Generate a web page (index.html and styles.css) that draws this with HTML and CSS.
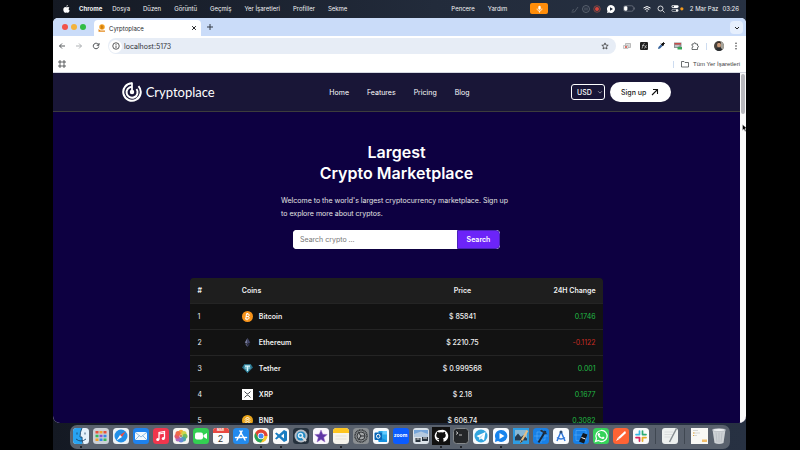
FILE: index.html
```html
<!DOCTYPE html>
<html lang="en">
<head>
<meta charset="utf-8">
<title>Cyrptoplace</title>
<link rel="stylesheet" href="styles.css">
</head>
<body>
<div class="desktop">
  <header class="menubar" lang="tr">
    <svg class="apple" viewBox="0 0 16 18"><path fill="#fff" d="M11 0c.2 2-1.500 4-3.300 4C7.500 2 9.200.3 11 0zM8 5c1 0 2-.8 3.500-.8 1.300 0 2.500.7 3.200 1.700-2.800 1.700-2.300 5.500.6 6.700C14.500 15 13 17.600 11.300 17.600c-1.200 0-1.600-.7-3.100-.7s-2 .7-3.100.7C3 17.600.7 13.600.7 10 .7 6.300 3 4.300 5.200 4.300 6.400 4.300 7.300 5 8 5z"/></svg>
    <strong>Chrome</strong>
    <nav class="menus"><span>Dosya</span><span>Düzen</span><span>Görüntü</span><span>Geçmiş</span><span>Yer İşaretleri</span><span>Profiller</span><span>Sekme</span></nav>
    <nav class="menus after-notch"><span>Pencere</span><span>Yardım</span></nav>
    <span class="mic"><svg viewBox="0 0 8 10"><rect x="2.500" y="1" width="3" height="5" rx="1.500" fill="#fff"/><path d="M1 4.500c0 4 6 4 6 0M4 7.500V9.500" stroke="#fff" fill="none"/></svg></span>
    <div class="status">
      <div class="recording">
        <svg class="s8" viewBox="0 0 16 16" fill="none" stroke="#5e6673" stroke-width="1.500"><path d="M1 14h6l7-10M2 11l4-2"/></svg>
        <svg class="s8" viewBox="0 0 16 16" fill="none" stroke="#69717e" stroke-width="1.500"><circle cx="8" cy="8" r="7"/><path d="M6 5v6M10 5v6"/></svg>
        <svg class="s8" viewBox="0 0 16 16"><circle cx="8" cy="8" r="6.500" fill="none" stroke="#a35148" stroke-width="1.500"/><circle cx="8" cy="8" r="4" fill="#d8453c"/></svg>
      </div>
      <svg class="s8 play" viewBox="0 0 16 16"><path fill="#fff" d="M8 0a8 8 0 1 1-4 15L0 16l1-4A8 8 0 0 1 8 0z"/><path fill="#222b3a" d="M6 4.500v7L12 8z"/></svg>
      <svg class="battery" viewBox="0 0 22 12"><rect x="1" y="1" width="18" height="10" rx="3" fill="none" stroke="#8a919c"/><rect x="2" y="2" width="6" height="8" rx="2" fill="#fff"/><path d="M21 4v4" stroke="#8a919c"/></svg>
      <svg class="s8" viewBox="0 0 16 16" fill="none" stroke="#fff" stroke-width="2"><path d="M1 6q7-6 14 0M3.500 9q4.500-4 9 0"/><path d="M6 11.500q2-1.500 4 0L8 14z" fill="#fff" stroke="none"/></svg>
      <svg class="s8" viewBox="0 0 16 16" fill="none" stroke="#fff" stroke-width="1.600"><circle cx="7" cy="7" r="5"/><path d="M11 11l4 4"/></svg>
      <svg class="control" viewBox="0 0 24 16"><rect x="1" y="2" width="13" height="5" rx="2.500" fill="#fff"/><circle cx="4" cy="4.500" r="1.500" fill="#222b3a"/><rect x="1.500" y="9.500" width="12" height="4" rx="2" fill="none" stroke="#fff"/><circle cx="11" cy="11.500" r="2" fill="#fff"/><circle cx="20" cy="8.500" r="3" fill="#f59a1c"/></svg>
      <span class="date">2 Mar Paz</span><span>03:26</span>
    </div>
  </header>

  <div class="window">
    <div class="tabs">
      <div class="lights"><i class="red"></i><i class="amber"></i><i class="green"></i></div>
      <div class="tab">
        <svg class="s8" viewBox="0 0 16 16"><circle cx="8" cy="6" r="5.500" fill="#f5a11f"/><path d="M6.500 3v6M6.500 3.500h2.500q1 1.200 0 2.500H6.500h3q1 1.500-.5 3H6.500" fill="none" stroke="#b86a09"/><path d="M1 10l4 3h9v2.500H1z" fill="#e58a1d"/></svg>
        <span>Cyrptoplace</span>
        <button class="plain close" aria-label="Close tab"><svg viewBox="0 0 8 8"><path d="M1.500 1.500l5 5M6.500 1.500l-5 5" stroke="#202124" stroke-width="1.300"/></svg></button>
      </div>
      <button class="plain new-tab" aria-label="New tab"><svg viewBox="0 0 8 8"><path d="M4 1v6M1 4h6" stroke="#333a46"/></svg></button>
      <button class="plain tab-search" aria-label="Search tabs"><svg viewBox="0 0 8 8"><path d="M2 3l2 2 2-2" fill="none" stroke="#222"/></svg></button>
    </div>
    <div class="toolbar">
      <button class="plain" aria-label="Back"><svg viewBox="0 0 16 16" fill="none" stroke="#3c4043" stroke-width="1.700"><path d="M14 8H3M8 3L3 8l5 5"/></svg></button>
      <button class="plain" aria-label="Forward"><svg viewBox="0 0 16 16" fill="none" stroke="#a2a5a9" stroke-width="1.700"><path d="M2 8h11M8 3l5 5-5 5"/></svg></button>
      <button class="plain" aria-label="Reload"><svg viewBox="0 0 16 16" fill="none" stroke="#3c4043" stroke-width="1.800"><path d="M13 5.500A5.500 5.500 0 1 0 13.500 9M14 2v4.500H9.500"/></svg></button>
      <div class="address">
        <span class="info"><svg viewBox="0 0 16 16"><circle cx="8" cy="8" r="6.500" fill="none" stroke="#333" stroke-width="1.600"/><path d="M8 7v5M8 4v1.700" stroke="#333" stroke-width="1.600"/></svg></span>
        <input type="text" aria-label="Address" value="localhost:5173">
        <button class="plain" aria-label="Bookmark"><svg viewBox="0 0 16 16"><path d="M8 1.800l1.800 4.300 4.600.4-3.500 3 1.100 4.500L8 11.600 4 14l1.100-4.500-3.500-3 4.600-.4z" fill="none" stroke="#333" stroke-width="1.500"/></svg></button>
      </div>
      <div class="extensions">
        <svg viewBox="0 0 16 16"><path d="M5 3h10v8H5z" fill="#ddd" stroke="#888"/><path d="M1 7h9v6H1z" fill="#eee" stroke="#999"/><circle cx="6" cy="10" r="2" fill="#d54b3f"/></svg>
        <svg viewBox="0 0 16 16"><rect width="16" height="16" rx="2" fill="#202020"/><path d="M4 13L7 4q.5-1 2-1M4 7h4M9 7l4 5M13 6l-4 7" stroke="#ddd" stroke-width="1.300" fill="none"/></svg>
        <svg viewBox="0 0 16 16"><path d="M2 14l1-4 5-5 3 3-5 5z" fill="#35619b"/><path d="M8 3l5 5M9 5l4-4 2 2-4 4z" fill="#111" stroke="#111" stroke-width="2"/></svg>
        <svg viewBox="0 0 16 16"><path d="M0 1h15v11H0z" fill="#8d9598"/><path d="M1 2h13v3H1z" fill="#c94b48"/><path d="M2 7h9M2 9h7" stroke="#eee"/><path d="M7 10h9v5H7z" fill="#38a556"/></svg>
        <svg viewBox="0 0 16 16"><path d="M2 4h3.500q0-2.500 2-2.500t2 2.500H13v3.500q2 0 2 1.700T13 11v4H2v-4q2 0 2-1.800T2 7.500z" fill="none" stroke="#3c4043" stroke-width="1.500"/></svg>
      </div>
      <i class="divider"></i>
      <svg class="avatar" viewBox="0 0 20 20"><circle cx="10" cy="10" r="10" fill="#47423c"/><path d="M12 0q8 3 8 10t-5 9z" fill="#a6a49b"/><ellipse cx="10" cy="8" rx="4" ry="5" fill="#c99978"/><path d="M3 17q7-8 14 0-7 6-14 0z" fill="#292d31"/><path d="M6 6q3-5 8 0l-1-4H8z" fill="#33251d"/></svg>
      <button class="plain" aria-label="Menu"><svg viewBox="0 0 16 16" fill="#333"><circle cx="8" cy="2.500" r="1.500"/><circle cx="8" cy="8" r="1.500"/><circle cx="8" cy="13.500" r="1.500"/></svg></button>
    </div>
    <div class="bookmarks" lang="tr">
      <svg class="s8" viewBox="0 0 16 16" fill="none" stroke="#3c4043" stroke-width="1.600"><path d="M2 2h4v4H2zM10 2h4v4h-4zM2 10h4v4H2zM10 10h4v4h-4z"/></svg>
      <i class="divider"></i>
      <svg class="s8" viewBox="0 0 16 16"><path d="M1 3h5l2 2h7v9H1z" fill="none" stroke="#3c4043" stroke-width="1.500"/></svg>
      <span>Tüm Yer İşaretleri</span>
    </div>

    <div class="viewport">
      <div class="site">
        <header class="navbar">
          <a class="logo" href="#">
            <svg viewBox="0 0 40 40" fill="none" stroke="#fff" stroke-width="4"><path d="M20 2.500A17.500 17.500 0 1 0 33 8.300"/><path d="M20 9.500A11 11 0 1 0 29 14"/><path d="M20 1v19" stroke-width="3.500"/><circle cx="20" cy="20" r="4.500" fill="#fff" stroke="none"/></svg>
            <span>Cryptoplace</span>
          </a>
          <nav class="links"><a href="#">Home</a><a href="#">Features</a><a href="#">Pricing</a><a href="#">Blog</a></nav>
          <div class="actions">
            <span class="currency"><select aria-label="Currency"><option>USD</option></select><svg viewBox="0 0 8 8"><path d="M1.500 3L4 5.500 6.500 3" fill="none" stroke="#bbb"/></svg></span>
            <button class="signup">Sign up <svg viewBox="0 0 16 16"><path d="M2 14L13 3M4 3h9v9" fill="none" stroke="#111" stroke-width="2.200"/></svg></button>
          </div>
        </header>
        <main>
          <section class="hero">
            <h1>Largest<br>Crypto Marketplace</h1>
            <p>Welcome to the world's largest cryptocurrency marketplace. Sign up to explore more about cryptos.</p>
            <form class="search"><input type="text" aria-label="Search crypto" placeholder="Search crypto ..."><button type="button">Search</button></form>
          </section>
          <table class="coins">
            <thead><tr><th class="rank">#</th><th class="name">Coins</th><th class="price">Price</th><th class="change">24H Change</th></tr></thead>
            <tbody>
              <tr><td>1</td><td class="name"><svg viewBox="0 0 22 22"><circle cx="11" cy="11" r="11" fill="#f7931a"/><path d="M9 5.500L7.500 16M8 6h4q3 0 2.500 2.500T11 11H8h4q3 .5 2.300 3T11 16H6.500M11 4v2M10 16v2.500" fill="none" stroke="#fff" stroke-width="2"/></svg>Bitcoin</td><td class="price">$ 85841</td><td class="change up">0.1746</td></tr>
              <tr><td>2</td><td class="name"><svg viewBox="0 0 22 22"><path d="M11 2L5.500 11l5.500 3z" fill="#777c9c"/><path d="M11 2l5.500 9-5.500 3z" fill="#42466b"/><path d="M5.500 12.500l5.500 3V20z" fill="#686d90"/><path d="M16.500 12.500l-5.500 3V20z" fill="#343859"/></svg>Ethereum</td><td class="price">$ 2210.75</td><td class="change down">-0.1122</td></tr>
              <tr><td>3</td><td class="name"><svg viewBox="0 0 22 22"><path d="M4 3h14l4 6-11 11L0 9z" fill="#286f87"/><path d="M4 3h14l-2 6-5 11L5 9z" fill="#429bb5"/><path d="M6 6h10M11 6v10" stroke="#e2fbff" stroke-width="2.500"/><ellipse cx="11" cy="10" rx="6" ry="1.500" fill="none" stroke="#c0e8ee"/></svg>Tether</td><td class="price">$ 0.999568</td><td class="change up">0.001</td></tr>
              <tr><td>4</td><td class="name"><svg viewBox="0 0 22 22"><path fill="#fff" d="M0 0h22v22H0z"/><path d="M5 5l3.500 3.500q2.500 2.500 5 0L17 5M5 17l3.500-3.500q2.500-2.500 5 0L17 17" fill="none" stroke="#23292f" stroke-width="1.800"/></svg>XRP</td><td class="price">$ 2.18</td><td class="change up">0.1677</td></tr>
              <tr><td>5</td><td class="name"><svg viewBox="0 0 22 22"><circle cx="11" cy="11" r="11" fill="#e9a51c"/><path d="M6 9l5-5 5 5M8 11l3-3 3 3-3 3zM6 13l5 5 5-5" fill="none" stroke="#fff" stroke-width="2"/></svg>BNB</td><td class="price">$ 606.74</td><td class="change up">0.3082</td></tr>
            </tbody>
          </table>
        </main>
      </div>
      <div class="scrollbar"><i></i><svg class="cursor" viewBox="0 0 10 16"><path d="M1 1v12l3-3 2 5 2-1-2-5h4z" fill="#000" stroke="#fff" stroke-width=".7"/></svg></div>
    </div>
  </div>

  <footer class="dock">
    <span class="app open"><svg viewBox="0 0 32 32"><rect width="32" height="32" rx="7" fill="#e6f1fa"/><path d="M7 0h11q-4 8-4 18h4v14H7q-7 0-7-7V7q0-7 7-7z" fill="#28a3f2"/><path d="M18 0q-4 8-4 18h4q0 8 2 14M8 9v4M24 9v4M6 22q10 8 20 0" fill="none" stroke="#174066" stroke-width="1.700"/></svg></span>
    <span class="app"><svg viewBox="0 0 32 32"><rect width="32" height="32" rx="7" fill="#cbd0d6"/><path fill="#e7503d" d="M5 6h6v5H5zM21 6h6v5h-6z"/><path fill="#f4a12a" d="M13 6h6v5h-6zM5 21h6v5H5z"/><path fill="#38b956" d="M5 13.500h6v5H5zM21 21h6v5h-6z"/><path fill="#8a54d0" d="M13 13.500h6v5h-6z"/><path fill="#3389e8" d="M21 13.500h6v5h-6zM13 21h6v5h-6z"/></svg></span>
    <span class="app"><svg viewBox="0 0 32 32"><rect width="32" height="32" rx="7" fill="#edf2f5"/><circle cx="16" cy="16" r="13" fill="#218fe8"/><path d="M25 7L14 14l4 4z" fill="#f04c3e"/><path d="M7 25l7-11 4 4z" fill="#fff"/></svg></span>
    <span class="app"><svg viewBox="0 0 32 32"><rect width="32" height="32" rx="7" fill="#1e82ee"/><rect x="4" y="8" width="24" height="16" rx="3" fill="#f3f8fe"/><path d="M5 9l11 9L27 9M5 23l8-8M27 23l-8-8" fill="none" stroke="#6da6d7" stroke-width="1.500"/></svg></span>
    <span class="app"><svg viewBox="0 0 32 32"><rect width="32" height="32" rx="7" fill="#f0364d"/><path d="M12 23V9l11-2v14M12 12l11-2" fill="none" stroke="#fff" stroke-width="2.500"/><circle cx="9.500" cy="23" r="3" fill="#fff"/><circle cx="20.500" cy="21" r="3" fill="#fff"/></svg></span>
    <span class="app"><svg viewBox="0 0 32 32"><rect width="32" height="32" rx="7" fill="#f6f5f1"/><g opacity=".9"><circle cx="16" cy="8.500" r="5" fill="#f6a823"/><circle cx="22" cy="11" r="5" fill="#ccd33a"/><circle cx="24" cy="16.500" r="5" fill="#64b94b"/><circle cx="21" cy="22" r="5" fill="#3b9f9a"/><circle cx="16" cy="24" r="5" fill="#557fd4"/><circle cx="10" cy="22" r="5" fill="#a25bb7"/><circle cx="8" cy="16.500" r="5" fill="#df4a60"/><circle cx="10" cy="11" r="5" fill="#ee5b37"/></g><circle cx="16" cy="16" r="2" fill="#b06b2f"/></svg></span>
    <span class="app"><svg viewBox="0 0 32 32"><rect width="32" height="32" rx="7" fill="#33d052"/><rect x="4" y="9" width="16" height="14" rx="4" fill="#fff"/><path d="M21 14l7-4v12l-7-4z" fill="#fff"/></svg></span>
    <span class="app calendar"><b>MAR</b><span>2</span></span>
    <span class="app"><svg viewBox="0 0 32 32"><rect width="32" height="32" rx="7" fill="#238bee"/><path d="M18 6L8 24M14 6l10 18M5 19h13M22 19h5" stroke="#fff" stroke-width="3" stroke-linecap="round"/></svg></span>
    <span class="app open"><svg viewBox="0 0 32 32"><rect width="32" height="32" rx="7" fill="#fafafa"/><circle cx="16" cy="16" r="13" fill="#f8c72d"/><path d="M16 16H29A13 13 0 0 0 4.700 9.500L10 19z" fill="#df4437"/><path d="M4.700 9.500A13 13 0 0 0 16 29l6-10H10z" fill="#24a259"/><circle cx="16" cy="16" r="6.500" fill="#fff"/><circle cx="16" cy="16" r="5" fill="#4285f4"/></svg></span>
    <span class="app open"><svg viewBox="0 0 32 32"><rect width="32" height="32" rx="7" fill="#fafafa"/><path d="M22 4l6 3v18l-6 3L12 19l-5 4-3-2 5-5-5-5 3-2 5 4zM22 11l-6 5 6 5z" fill="#187cc1" fill-rule="evenodd"/></svg></span>
    <span class="app"><svg viewBox="0 0 32 32"><rect width="32" height="32" rx="7" fill="#25313d"/><circle cx="16" cy="16" r="13" fill="#b6bdc6"/><circle cx="16" cy="16" r="9" fill="#1e87c2"/><circle cx="15" cy="15" r="4" fill="none" stroke="#d9f1ff" stroke-width="3"/><path d="M18 18l8 8" stroke="#ddd" stroke-width="4"/></svg></span>
    <span class="app"><svg viewBox="0 0 32 32"><rect width="32" height="32" rx="7" fill="#faf7fc"/><path d="M16 4l3.500 8.500 9 .5-7 6 2.500 9-8-5-8 5 2.500-9-7-6 9-.5z" fill="#5d35a5" stroke="#9c70c5"/></svg></span>
    <span class="app open"><svg viewBox="0 0 32 32"><rect width="32" height="32" rx="7" fill="#f6f4ec"/><path d="M0 10V7q0-7 7-7h18q7 0 7 7v3z" fill="#fdc51f"/><path d="M5 16h22M5 22h22" stroke="#d3d1ca"/></svg></span>
    <span class="app"><svg viewBox="0 0 32 32"><rect width="32" height="32" rx="7" fill="#8b8f92"/><circle cx="16" cy="16" r="12" fill="none" stroke="#303336" stroke-width="3" stroke-dasharray="2 1"/><circle cx="16" cy="16" r="8" fill="#a3a6a8" stroke="#34373a" stroke-width="2"/><path d="M16 16h8M16 16l-5-7M16 16l-5 7" stroke="#26292c" stroke-width="2"/></svg></span>
    <span class="app"><svg viewBox="0 0 32 32"><rect width="32" height="32" rx="7" fill="#f7fafc"/><path d="M11 6h17v20H11z" fill="#28a8ea"/><path d="M19 6h9v7h-9z" fill="#62caff"/><path d="M11 17l17 8v3H11z" fill="#1490df"/><rect x="3" y="9" width="15" height="15" rx="2" fill="#0867b9"/><ellipse cx="10.500" cy="16.500" rx="3.500" ry="4" fill="none" stroke="#fff" stroke-width="2"/></svg></span>
    <span class="app zoom">zoom</span>
    <span class="app"><svg viewBox="0 0 32 32"><rect width="32" height="32" rx="6" fill="#dbe2e9"/><path d="M2 4h28v14H2z" fill="#75a5da"/><path d="M2 12l14-5 14 5v6H2z" fill="#b4c9df"/><path d="M5 20h10v8H5zM18 18h12v8H18z" fill="#28323d"/><path d="M7 22h6M20 20h8" stroke="#eee" stroke-width="2"/></svg></span>
    <span class="app github open"><svg viewBox="0 0 32 32"><path d="M16 4a12 12 0 0 0-4 23.500V24q-3 .5-4-2.500 2 1 3.500 1 0-1.500 1-2-6-1-6-6 0-2 1.500-3.500-.5-2 .2-3.500 1.800 0 3.800 1.400 4-1 8 0Q22 7.500 24 7.500q.7 1.500 0 3.500 1.500 1.500 1.500 3.500 0 5-5.500 6 1 1 1 3v4A12 12 0 0 0 16 4z" fill="#fff"/></svg></span>
    <span class="app open"><svg viewBox="0 0 32 32"><rect x="1" y="1" width="30" height="30" rx="6" fill="#242629" stroke="#85898c" stroke-width="2"/><path d="M6 7l4 3-4 3M12 14h6" fill="none" stroke="#eee" stroke-width="1.500"/></svg></span>
    <span class="app"><svg viewBox="0 0 32 32"><rect width="32" height="32" rx="7" fill="#f7fafc"/><circle cx="16" cy="16" r="13" fill="#32a5df"/><path d="M7 16l18-8-3 17-6-4-3 3-1-5z" fill="#fff"/><path d="M12 19l10-8-7 10" fill="#b8dff2"/></svg></span>
    <span class="app open"><svg viewBox="0 0 32 32"><rect width="32" height="32" rx="7" fill="#f9fbff"/><path d="M16 4a12 12 0 1 1-6 22l-6 2 1-7A12 12 0 0 1 16 4z" fill="#1683ed"/><path d="M13 10v12l10-6z" fill="#fff"/></svg></span>
    <span class="app"><svg viewBox="0 0 32 32"><path d="M0 0h32v32H0z" fill="#2d9ce3"/><path d="M4 4h24v21H4z" fill="#89b8d4"/><path d="M4 18l6-7 6 7 5-4 7 7v4H4z" fill="#273c50"/><path d="M29 5L15 29" stroke="#e6bf83" stroke-width="4"/><path d="M17 24l-3 7 6-5" fill="#333"/></svg></span>
    <span class="app"><svg viewBox="0 0 32 32"><rect width="32" height="32" rx="7" fill="#1880e6"/><path d="M8 8h16v16H8zM2 16h28M16 2v28" fill="none" stroke="#62b7ff"/><path d="M25 6L11 29" stroke="#17283a" stroke-width="4"/><path d="M16 3l12 7-2 3-12-7z" fill="#263240"/></svg></span>
    <span class="app"><svg viewBox="0 0 32 32"><rect width="32" height="32" rx="7" fill="#fafcfe"/><path d="M16 7L8 26M16 7l8 19M8 19q8 6 16 0" fill="none" stroke="#3279dc" stroke-width="3"/><circle cx="16" cy="8" r="3" fill="#2c4d78"/></svg></span>
    <span class="app"><svg viewBox="0 0 32 32"><rect width="32" height="32" rx="7" fill="#1880e6"/><path d="M6 5h20v20H6zM2 14h28" fill="none" stroke="#62b7ff"/><path d="M20 10l9 3-7 18-10-4z" fill="#12181f"/><path d="M17 19l8 3" stroke="#fff" stroke-width="2"/></svg></span>
    <span class="app"><svg viewBox="0 0 32 32"><rect width="32" height="32" rx="7" fill="#35d35a"/><path d="M16 5a11 11 0 1 1-5 20l-6 2 2-6A11 11 0 0 1 16 5z" fill="none" stroke="#fff" stroke-width="2.500"/><path d="M11 10l2 0 1.500 3-1.500 2q2 3 5 4l2-2 3 2q0 3-4 3-8-2-10-9 0-2 2-3z" fill="#fff"/></svg></span>
    <span class="app"><svg viewBox="0 0 32 32"><rect width="32" height="32" rx="7" fill="#ff6334"/><path d="M24 6q3 2 1 5L13 22l-7 4 4-7z" fill="#fff"/><path d="M10 19l3 3" stroke="#ff6334"/></svg></span>
    <span class="app"><svg viewBox="0 0 32 32"><rect width="32" height="32" rx="7" fill="#fafafa"/><g fill="none" stroke-width="3.500" stroke-linecap="round"><path d="M13 6v7M6 13h7" stroke="#36b9e6"/><path d="M19 13V6M19 13h7" stroke="#2eac75"/><path d="M19 19h7M19 19v7" stroke="#e5ad29"/><path d="M6 19h7M13 19v7" stroke="#d8255d"/></g></svg></span>
    <i class="dock-divider"></i>
    <span class="app"><svg viewBox="0 0 32 32"><rect width="32" height="32" rx="6" fill="#edf0ef"/><path d="M5 8h18M5 13h16M5 18h12" stroke="#c4c8c8"/><path d="M29 1L15 28" stroke="#858c90" stroke-width="3"/></svg></span>
    <i class="dock-divider"></i>
    <span class="app file"><svg viewBox="0 0 34 32"><path d="M0 0h34v32H0z" fill="#f8f8f5"/><path d="M4 5h10M4 10h14M4 15h8" stroke="#b1b4b3"/><path d="M4 10h3M4 15h2" stroke="#e9a93c" stroke-width="2"/><path d="M22 23h10v5H22z" fill="#f3bd68"/></svg></span>
    <span class="app trash"><svg viewBox="0 0 28 32"><path d="M1 3h26l-4 27q-9 4-18 0z" fill="#cdd1d4"/><ellipse cx="14" cy="4" rx="13" ry="3" fill="#eef0f2" stroke="#a5abb1"/><path d="M8 9l2 19M14 9v20M20 9l-2 19" stroke="#a8aeb4"/></svg></span>
  </footer>
</div>
</body>
</html>
```
FILE: styles.css
```css
* { box-sizing: border-box; }
body {
  margin: 0;
  padding: 0 54px 0 53px;
  background: #000;
  font-family: Inter, "Liberation Sans", sans-serif;
  font-size: 7px;
}
svg { display: block; flex: none; }
a { color: inherit; text-decoration: none; }
button, input, select { font: inherit; }
.desktop {
  height: 100vh;
  display: flex;
  flex-direction: column;
  overflow: hidden;
  background: linear-gradient(90deg, #141923, #222b3b 55%, #273142);
}
.s8 { width: 8px; height: 8px; }
.plain {
  border: 0;
  padding: 0;
  background: none;
  display: grid;
  place-items: center;
  flex: none;
}
.plain svg { width: 8px; height: 8px; }
.divider { width: 1px; height: 7px; background: #cddcf0; flex: none; }

/* System menu bar */
.menubar {
  height: 17px;
  flex: none;
  display: flex;
  align-items: center;
  padding: 0 7px 0 10px;
  color: #f2f3f5;
  font-size: 6px;
  white-space: nowrap;
}
.apple { width: 7px; height: 8px; margin-right: 9px; }
.menubar strong { margin-right: 10px; }
.menus { display: flex; gap: 13px; }
.after-notch { margin-left: 104px; }
.mic {
  width: 18px;
  height: 11px;
  margin-left: 23px;
  border-radius: 2px;
  background: #ff8d0a;
  display: grid;
  place-items: center;
}
.mic svg { width: 7px; height: 8px; }
.status { display: flex; align-items: center; gap: 6px; margin-left: auto; }
.recording { display: flex; gap: 3px; }
.play, .battery { margin-right: 2px; }
.battery { width: 12px; height: 7px; }
.control { width: 13px; height: 9px; }
.date { margin-right: -2px; }

/* Browser chrome */
.window {
  flex: 1;
  min-height: 0;
  display: flex;
  flex-direction: column;
  overflow: hidden;
  border-radius: 5px 5px 7px 7px;
  margin-top: 1px;
  background: #fff;
}
.tabs {
  height: 18px;
  flex: none;
  display: flex;
  align-items: flex-end;
  padding: 0 3px 0 9px;
  background: #cadcf9;
}
.lights { display: flex; gap: 3px; align-self: center; margin-right: 8px; }
.lights i { width: 6px; height: 6px; border-radius: 50%; }
.red { background: #f25348; }
.amber { background: #f3b33c; }
.green { background: #30bd45; }
.tab {
  width: 107px;
  height: 16px;
  display: flex;
  align-items: center;
  gap: 3px;
  padding: 0 4px;
  border-radius: 4px 4px 0 0;
  background: #fff;
  color: #25282c;
  font-size: 6px;
}
.close { margin-left: auto; }
.plain.close svg { width: 6px; height: 6px; }
.new-tab { width: 18px; height: 18px; }
.tab-search {
  width: 13px;
  height: 13px;
  margin: 0 0 2px auto;
  border-radius: 4px;
  background: #e6effd;
}
.toolbar {
  height: 20px;
  flex: none;
  display: flex;
  align-items: center;
  gap: 7px;
  padding: 0 5px 0 4px;
}
.toolbar > .plain { width: 10px; height: 10px; }
.address {
  flex: 1;
  height: 16px;
  display: flex;
  align-items: center;
  padding: 0 7px 0 1px;
  border-radius: 8px;
  background: #e7edf6;
}
.info {
  width: 13px;
  height: 13px;
  border-radius: 50%;
  background: #fff;
  display: grid;
  place-items: center;
}
.info svg { width: 8px; height: 8px; }
.address input {
  flex: 1;
  min-width: 0;
  border: 0;
  padding: 0 2px;
  background: none;
  color: #303338;
  outline: 0;
}
.extensions { display: flex; gap: 9px; }
.extensions svg { width: 8px; height: 8px; }
.avatar { width: 10px; height: 10px; }
.bookmarks {
  height: 17px;
  flex: none;
  display: flex;
  align-items: center;
  gap: 4px;
  padding: 0 6px 0 5px;
  border-bottom: 1px solid #d5d9e1;
  color: #3c4043;
  font-family: "Liberation Sans", sans-serif;
  font-size: 6px;
}
.bookmarks .divider { margin: 0 3px 0 auto; }

/* Page */
.viewport { flex: 1; min-height: 0; display: flex; background: #0d0041; }
.site { flex: 1; min-width: 0; overflow: hidden; color: #fff; }
.scrollbar { width: 6px; position: relative; background: #fafafa; padding: 1px 1px 0; }
.scrollbar i { display: block; height: 40px; border-radius: 2px; background: #b8b8bd; }
.cursor { position: absolute; left: 2px; top: 51px; width: 5px; height: 8px; }
.navbar {
  height: 39px;
  display: flex;
  align-items: center;
  justify-content: space-between;
  padding: 0 10%;
  border-bottom: 1px solid #3c3c3c;
  background: #191637;
}
.logo { display: flex; align-items: center; gap: 4px; font: 13px Lato, sans-serif; }
.logo svg { width: 20px; height: 20px; }
.links { display: flex; gap: 18px; margin-left: 13px; }
.actions { display: flex; align-items: center; gap: 5px; }
.currency {
  display: flex;
  align-items: center;
  width: 34px;
  height: 16px;
  padding: 0 1px 0 5px;
  border: 1px solid #fff;
  border-radius: 3px;
  font-weight: 500;
}
.currency select {
  appearance: none;
  flex: 1;
  min-width: 0;
  border: 0;
  padding: 0;
  background: none;
  color: #fff;
}
.currency svg { width: 6px; height: 6px; }
.signup {
  display: flex;
  align-items: center;
  gap: 5px;
  height: 20px;
  padding: 0 12px 0 11px;
  border: 0;
  border-radius: 10px;
  background: #fff;
  color: #191919;
  font-weight: 500;
}
.signup svg { width: 8px; height: 8px; }
.hero { display: flex; flex-direction: column; align-items: center; padding: 30px 0 29px; }
h1 { margin: 0; text-align: center; font-size: 16px; line-height: 21px; font-weight: 600; }
.hero p { width: 231px; margin: 10px 0; color: #e3e3e3; line-height: 13px; }
.search { display: flex; width: 207px; height: 19px; border-radius: 4px; background: #fff; overflow: hidden; }
.search input {
  flex: 1;
  min-width: 0;
  border: 0;
  padding: 0 7px;
  background: #fff;
  color: #222;
}
.search input::placeholder { color: #757575; }
.search button {
  width: 43px;
  border: 1px solid #4a22b8;
  border-radius: 0 4px 4px 0;
  background: #6c24f8;
  color: #fff;
  font-weight: 600;
  padding: 0;
}
.coins {
  width: 60%;
  margin: 0 auto;
  table-layout: fixed;
  border-spacing: 0;
  border-radius: 4px;
  overflow: hidden;
  background: #121212;
  color: #f0f0f0;
}
.coins th, .coins td { height: 26px; padding: 0 7px; text-align: left; border-bottom: 1px solid #242424; }
.coins .rank { width: 12%; }
.coins .name { width: 42%; padding-left: 2px; font-weight: 600; }
.coins .price { width: 24%; text-align: center; font-weight: 500; }
.coins .change { text-align: right; }
.coins th, .coins th.price { background: #1e1e1e; font-weight: 600; }
.name svg { display: inline-block; width: 11px; height: 11px; margin-right: 6px; vertical-align: -3px; }
.up { color: #21ba45; }
.down { color: #c72c22; }

/* Dock */
.dock {
  flex: none;
  align-self: center;
  display: flex;
  gap: 4px;
  padding: 3px 4px 5px 3px;
  margin: 2px 0 1px;
  border-radius: 7px;
  background: #59616d;
}
.app { position: relative; width: 16px; height: 16px; flex: none; }
.app svg { width: 16px; height: 16px; }
.open::after {
  content: "";
  position: absolute;
  left: 7px;
  bottom: -4px;
  width: 2px;
  height: 2px;
  border-radius: 50%;
  background: #101216;
}
.github { background: #111; box-shadow: 0 0 0 1px #111; }
.calendar { border-radius: 3px; background: #fafafa; overflow: hidden; text-align: center; }
.calendar b { display: block; height: 5px; background: #e84840; color: #fff; font-size: 3px; line-height: 5px; }
.calendar span { display: block; color: #333; font-size: 9px; line-height: 11px; }
.zoom {
  border-radius: 3px;
  background: #0b5cff;
  color: #fff;
  font-size: 5px;
  font-weight: 700;
  line-height: 15px;
  text-align: center;
}
.dock-divider { width: 1px; margin: 0 2px; background: #404852; }
.file, .file svg { width: 17px; }
.trash, .trash svg { width: 14px; }
```
